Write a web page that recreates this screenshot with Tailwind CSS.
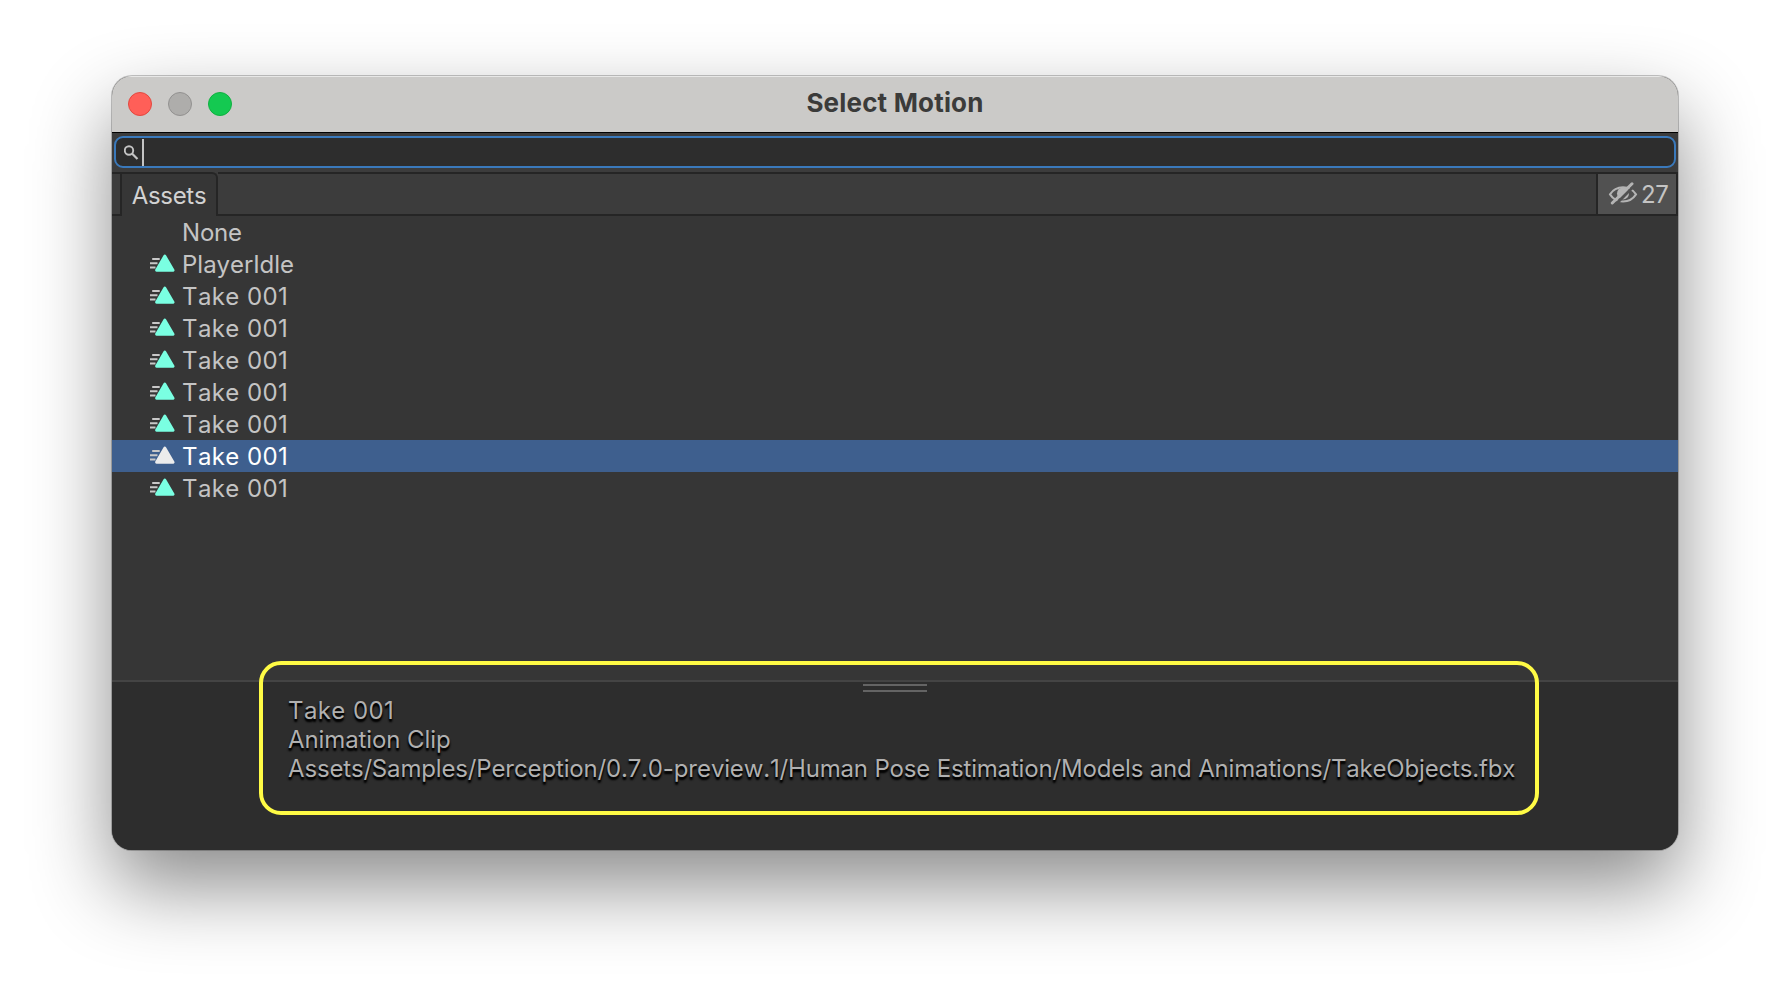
<!DOCTYPE html>
<html lang="en">
<head>
<meta charset="utf-8">
<title>Select Motion</title>
<script src="https://cdn.jsdelivr.net/npm/@tailwindcss/browser@4"></script>
</head>
<body class="h-[998px] w-[1790px] overflow-hidden bg-white px-28 pt-[76px] font-['Inter','Liberation_Sans',sans-serif] text-[24px] text-[#c4c4c4] [font-kerning:none]">
<svg class="hidden">
  <symbol id="clip" viewBox="0 0 26 20">
    <path d="M3.200 5h7.500M1 9.300h7.500M1 13.500h5.500" stroke="#c8c8c8" stroke-width="1.9" fill="none"/>
    <path d="M15.8 2L24.100 16.300H7.500z" fill="currentColor" stroke="currentColor" stroke-width="2.8" stroke-linejoin="round"/>
  </symbol>
</svg>
<main class="flex h-[774px] w-[1566px] flex-col overflow-hidden rounded-[20px] bg-[#363636] shadow-[0_0_0_1px_rgba(0,0,0,0.22),0_36px_80px_rgba(0,0,0,0.46)]">
  <header class="grid h-[57px] shrink-0 grid-cols-[1fr_auto_1fr] items-center border-b border-black bg-[#cbcac8] px-4 shadow-[inset_0_1px_0_#e8e8e7]">
    <div class="flex gap-4">
      <span class="size-6 rounded-full border border-[#e2483f] bg-[#ff5f58]"></span>
      <span class="size-6 rounded-full border border-[#929190] bg-[#aeadab]"></span>
      <span class="size-6 rounded-full border border-[#10b040] bg-[#14c951]"></span>
    </div>
    <h1 class="pb-0.5 text-[26px] leading-[30px] font-bold tracking-[0.18px] text-[#3b3b3a]">Select Motion</h1>
    <div></div>
  </header>

  <div class="flex h-[39px] shrink-0 items-start bg-[#3c3c3c] px-0.5 pt-[3px]">
    <div class="flex h-8 w-full items-center rounded-[9px] border-2 border-[#3a79bb] bg-[#2d2d2d] pl-2">
      <svg class="mt-0.5 size-4" viewBox="0 0 16 16" fill="none" stroke="#c4c4c4"><circle cx="5" cy="5.500" r="4.200" stroke-width="1.9"/><path d="M8 8.500l5.500 5.500" stroke-width="2.2"/></svg>
      <span class="ml-0.5 h-[27px] w-0.5 bg-[#c4c4c4]"></span>
    </div>
  </div>

  <nav class="flex h-11 shrink-0 bg-[#3c3c3c]">
    <div class="w-2 border-y-2 border-[#252525]"></div>
    <div class="flex w-[98px] items-center justify-center rounded-tr-md border-x-2 border-t-2 border-[#252525] bg-[#363636] pt-0.5 tracking-[-0.3px] text-[#d2d2d2]">Assets</div>
    <div class="flex-1 border-y-2 border-[#252525]"></div>
    <div class="flex w-[82px] items-center border-2 border-[#252525] bg-[#515151] pl-2.5">
      <svg class="h-6 w-[30px]" viewBox="0 0 30 24" fill="none" stroke="#b4b4b4">
        <path d="M2 12.400C8 3 22 3 28 12.400C22 21.800 8 21.800 2 12.400z" stroke-width="2"/>
        <circle cx="15" cy="11.500" r="6" fill="#b4b4b4" stroke="none"/>
        <path d="M6.500 23.500L27 3" stroke="#515151" stroke-width="3"/>
        <path d="M4.300 21L24 1.800" stroke-width="3" stroke-linecap="round"/>
      </svg>
      <span class="ml-[3px] pt-0.5 tracking-[-0.4px]">27</span>
    </div>
  </nav>

  <ul class="h-[464px] shrink-0 tracking-[0.4px]">
    <li class="flex h-8 items-center pt-0.5 pl-[70px] tracking-[-0.2px]">None</li>
    <li class="flex h-8 items-center pt-0.5 pl-[37px] tracking-normal"><svg class="mr-[7px] mb-0.5 h-5 w-[26px] text-[#7affe2]"><use href="#clip"/></svg>PlayerIdle</li>
    <li class="flex h-8 items-center pt-0.5 pl-[37px]"><svg class="mr-[7px] mb-0.5 h-5 w-[26px] text-[#7affe2]"><use href="#clip"/></svg>Take 001</li>
    <li class="flex h-8 items-center pt-0.5 pl-[37px]"><svg class="mr-[7px] mb-0.5 h-5 w-[26px] text-[#7affe2]"><use href="#clip"/></svg>Take 001</li>
    <li class="flex h-8 items-center pt-0.5 pl-[37px]"><svg class="mr-[7px] mb-0.5 h-5 w-[26px] text-[#7affe2]"><use href="#clip"/></svg>Take 001</li>
    <li class="flex h-8 items-center pt-0.5 pl-[37px]"><svg class="mr-[7px] mb-0.5 h-5 w-[26px] text-[#7affe2]"><use href="#clip"/></svg>Take 001</li>
    <li class="flex h-8 items-center pt-0.5 pl-[37px]"><svg class="mr-[7px] mb-0.5 h-5 w-[26px] text-[#7affe2]"><use href="#clip"/></svg>Take 001</li>
    <li class="flex h-8 items-center bg-[#3e5f8e] pt-0.5 pl-[37px] text-white"><svg class="mr-[7px] mb-0.5 h-5 w-[26px] text-[#ececec]"><use href="#clip"/></svg>Take 001</li>
    <li class="flex h-8 items-center pt-0.5 pl-[37px]"><svg class="mr-[7px] mb-0.5 h-5 w-[26px] text-[#7affe2]"><use href="#clip"/></svg>Take 001</li>
  </ul>

  <section class="relative flex-1 border-t-2 border-[#444444] bg-[#2d2d2d] pt-0.5">
    <div class="ml-[751px] h-2 w-16 border-y-2 border-[#646464]"></div>
    <div class="mt-[4px] pl-[176px] leading-[29px] whitespace-nowrap text-[#b0b0b0] [text-shadow:0_2px_2px_#000,0_3px_2px_#000]">
      <p class="tracking-[0.4px]">Take 001</p>
      <p class="tracking-[-0.1px]">Animation Clip</p>
      <p class="tracking-[-0.17px]">Assets/Samples/Perception/0.7.0-preview.1/Human Pose Estimation/Models and Animations/TakeObjects.fbx</p>
    </div>
    <div class="absolute top-[-21px] left-[147px] h-[154px] w-[1280px] rounded-[22px] border-4 border-[#fffb45]"></div>
  </section>
</main>
</body>
</html>
